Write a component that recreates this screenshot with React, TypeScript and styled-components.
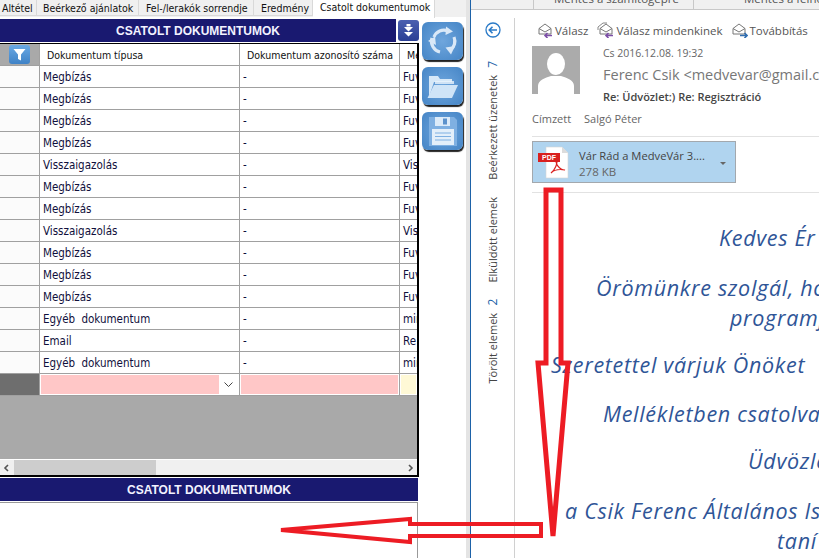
import React from 'react';
import styled, { createGlobalStyle } from 'styled-components';

const GlobalStyle = createGlobalStyle`
  html, body {
    margin: 0;
    padding: 0;
    background: #fff;
    overflow: hidden;
  }
  * {
    box-sizing: border-box;
  }
`;

const Page = styled.div`
  position: relative;
  display: flex;
  width: 819px;
  height: 558px;
  overflow: hidden;
  font-family: 'Liberation Sans', Arial, sans-serif;
  color: #111;
`;

/* left window */

const LeftPane = styled.div`
  display: flex;
  flex-direction: column;
  width: 470px;
  flex: none;
  border-right: 4px solid #e4e4e4;
`;

const TabBar = styled.div`
  display: flex;
  height: 17px;
  flex: none;
  background: #f0f0f0;
`;

const Tab = styled.div<{ $width: number; $pad: number; $active?: boolean }>`
  width: ${p => p.$width}px;
  height: ${p => (p.$active ? 18 : 16)}px;
  padding-left: ${p => p.$pad}px;
  background: ${p => (p.$active ? '#fff' : '#f0f0f0')};
  border-right: 1px solid #d9d9d9;
  border-bottom: ${p => (p.$active ? 'none' : '1px solid #d9d9d9')};
  font-family: 'DejaVu Sans', sans-serif;
  font-stretch: condensed;
  font-size: 10.5px;
  line-height: ${p => (p.$active ? 14 : 16)}px;
  white-space: nowrap;
  overflow: hidden;
  flex: none;
`;

const WindowBody = styled.div`
  display: flex;
  flex: 1;
  min-height: 0;
`;

const MainColumn = styled.div`
  display: flex;
  flex-direction: column;
  width: 419px;
  flex: none;
  padding-top: 2px;
`;

const TitleRow = styled.div`
  display: flex;
  gap: 2px;
  height: 23px;
  flex: none;
`;

const TitleBar = styled.div<{ $footer?: boolean }>`
  flex: 1;
  height: 23px;
  flex-shrink: 0;
  margin-top: ${p => (p.$footer ? 1 : 0)}px;
  margin-right: ${p => (p.$footer ? 1 : 0)}px;
  background: #191970;
  color: #f2f2ff;
  font-size: 12px;
  font-weight: bold;
  line-height: 24px;
  text-align: center;
  ${p => (p.$footer ? 'flex: none;' : '')}
`;

const CollapseButton = styled.div`
  display: flex;
  align-items: center;
  justify-content: center;
  width: 21px;
  height: 21px;
  margin-top: 1px;
  border-radius: 3px;
  background: linear-gradient(#4a5fb0, #2b3f94);
`;

const GridFrame = styled.div`
  display: flex;
  flex-direction: column;
  height: 434px;
  flex: none;
  margin-top: 1px;
  border-top: 1px solid #000;
  border-right: 2px solid #000;
  border-bottom: 2px solid #000;
  background: #a9a9a9;
  overflow: hidden;
`;

const GridRow = styled.div`
  display: grid;
  grid-template-columns: 39px 1px 199px 1px 159px 1px 17px;
  height: 22px;
  flex: none;
  background: #a0a0a0;
  border-bottom: 1px solid #a0a0a0;
`;

const Cell = styled.div<{ $pad?: number }>`
  background: #fff;
  padding-left: ${p => p.$pad ?? 2}px;
  font-family: 'DejaVu Sans', sans-serif;
  font-stretch: condensed;
  font-size: 11.5px;
  word-spacing: 3px;
  line-height: 23px;
  color: #10103c;
  white-space: nowrap;
  overflow: hidden;
`;

const Divider = styled.div`
  background: #a0a0a0;
`;

const HeaderStub = styled.div`
  display: flex;
  justify-content: center;
  padding-top: 1px;
  background: #a9a9a9;
`;

const HeaderCell = styled(Cell)`
  font-size: 10.5px;
  word-spacing: 0;
  line-height: 22px;
  color: #111;
`;

const FilterButton = styled.div`
  display: flex;
  align-items: center;
  justify-content: center;
  width: 21px;
  height: 19px;
  border-radius: 3px;
  background: linear-gradient(#6aa9e4, #3f82c6);
`;

const RowStub = styled.div`
  background: #fbfbfb;
`;

const NewRowStub = styled.div`
  background: #6e6e6e;
`;

const NewRowCell = styled.div<{ $tint: string }>`
  display: flex;
  align-items: stretch;
  padding: 1px 1px;
  background: #fff;
  & > span:first-child {
    flex: 1;
    background: ${p => p.$tint};
  }
`;

const ComboArrow = styled.span`
  display: flex;
  align-items: center;
  justify-content: center;
  width: 19px;
  flex: none;
`;

const GridFill = styled.div`
  flex: 1;
  background: #a9a9a9;
`;

const ScrollBar = styled.div`
  display: flex;
  align-items: center;
  height: 16px;
  flex: none;
  padding: 0 3px;
  background: #f0f0f0;
  border-top: 1px solid #fff;
`;

const ScrollThumb = styled.div`
  width: 142px;
  height: 15px;
  margin-left: 5px;
  background: #cdcdcd;
`;

const ScrollSpacer = styled.div`
  flex: 1;
`;

const WhitePanel = styled.div`
  flex: 1;
  margin-top: 1px;
  margin-right: 1px;
  border-top: 1px solid #999;
  border-right: 1px solid #999;
  background: #fff;
`;

const SideButtons = styled.div`
  display: flex;
  flex-direction: column;
  gap: 7px;
  padding: 5px 0 0 3px;
`;

const SideButton = styled.div`
  display: flex;
  align-items: center;
  justify-content: center;
  width: 41px;
  height: 38px;
  border-radius: 6px;
  background: radial-gradient(circle, #6fa6dd, #4585c6);
  box-shadow: 1px 2px 1px #222;
`;

/* right window */

const RightPane = styled.div`
  display: flex;
  flex-direction: column;
  flex: 1;
  min-width: 0;
  border-left: 1px solid #1d62a8;
`;

const SaveBar = styled.div`
  display: flex;
  align-items: flex-end;
  height: 10px;
  flex: none;
  padding-left: 62px;
  background: #f0f0f0;
  border-bottom: 1px solid #c8c8c8;
  overflow: hidden;
`;

const SaveItem = styled.div<{ $width: number; $pad: number }>`
  width: ${p => p.$width}px;
  height: 9px;
  flex: none;
  border-left: 1px solid #c8c8c8;
  padding-left: ${p => p.$pad}px;
  font-family: 'Open Sans', sans-serif;
  font-size: 11.5px;
  line-height: 9px;
  color: #555;
  white-space: nowrap;
  & > span {
    position: relative;
    top: -6px;
  }
`;

const RightBody = styled.div`
  display: flex;
  flex: 1;
  min-height: 0;
  padding-top: 8px;
`;

const NavRail = styled.div`
  display: flex;
  flex-direction: column;
  align-items: center;
  width: 44px;
  flex: none;
  padding-top: 4px;
  padding-left: 1px;
  border-right: 1px solid #d0d0d0;
`;

const NavList = styled.div`
  display: flex;
  flex-direction: column;
  gap: 17px;
  margin-top: 23px;
`;

const NavItem = styled.div`
  display: flex;
  gap: 7px;
  writing-mode: vertical-rl;
  transform: rotate(180deg);
  font-family: 'Open Sans', sans-serif;
  font-size: 11px;
  line-height: 14px;
  color: #444;
  white-space: nowrap;
  & b {
    font-weight: 400;
    color: #1d62a8;
    font-size: 12px;
  }
`;

const Message = styled.div`
  flex: 1;
  min-width: 0;
  padding: 2px 0 0 17px;
`;

const ReplyBar = styled.div`
  display: flex;
  gap: 9px;
  height: 20px;
  padding-left: 5px;
`;

const ReplyAction = styled.div`
  display: flex;
  align-items: center;
  gap: 1px;
  font-family: 'Open Sans', sans-serif;
  font-size: 11.5px;
  color: #555;
  white-space: nowrap;
`;

const Sender = styled.div`
  display: flex;
  gap: 23px;
  height: 48px;
  margin-top: 6px;
`;

const Avatar = styled.div`
  width: 48px;
  height: 48px;
  flex: none;
  background: #ababab;
  overflow: hidden;
`;

const SenderText = styled.div`
  display: flex;
  flex-direction: column;
  white-space: nowrap;
`;

const DateLine = styled.div`
  font-family: 'Open Sans', sans-serif;
  font-size: 10.5px;
  line-height: 14px;
  color: #666;
`;

const NameLine = styled.div`
  margin-top: 5px;
  font-family: 'Open Sans', sans-serif;
  font-size: 14.5px;
  line-height: 20px;
  color: #777;
`;

const SubjectLine = styled.div`
  margin-top: 4px;
  font-family: 'Open Sans', sans-serif;
  font-size: 11px;
  font-weight: 600;
  line-height: 16px;
  color: #444;
`;

const Recipient = styled.div`
  display: flex;
  gap: 13px;
  height: 25px;
  margin-top: 17px;
  font-family: 'Open Sans', sans-serif;
  font-size: 11px;
  line-height: 16px;
  color: #666;
`;

const Rule = styled.div`
  height: 1px;
  background: #e2e2e2;
`;

const Attachment = styled.div`
  display: flex;
  align-items: center;
  width: 204px;
  height: 42px;
  margin-top: 4px;
  padding: 2px 0 0 5px;
  background: #b0d4ef;
  border: 1px solid #a3a8ad;
  font-family: 'Open Sans', sans-serif;
`;

const PdfIcon = styled.div`
  position: relative;
  width: 32px;
  height: 34px;
  flex: none;
`;

const PdfBadge = styled.span`
  position: absolute;
  left: 0;
  top: 7px;
  width: 22px;
  height: 9px;
  background: #d9201f;
  color: #fff;
  font-family: 'Liberation Sans', sans-serif;
  font-size: 7px;
  font-weight: bold;
  line-height: 9px;
  text-align: center;
`;

const AttachmentText = styled.div`
  flex: 1;
  margin-left: 9px;
  white-space: nowrap;
`;

const AttachmentName = styled.div`
  font-size: 11.2px;
  line-height: 17px;
  color: #444;
`;

const AttachmentSize = styled.div`
  font-size: 11.5px;
  line-height: 16px;
  color: #666;
`;

const AttachmentCaret = styled.span`
  width: 0;
  height: 0;
  margin-right: 9px;
  border-left: 3px solid transparent;
  border-right: 3px solid transparent;
  border-top: 3px solid #666;
`;

const MailBody = styled.div`
  margin-top: 9px;
  border-top: 1px solid #e2e2e2;
  padding-top: 30px;
`;

const MailLine = styled.div<{ $indent: number; $gap: number }>`
  margin-top: ${p => p.$gap}px;
  padding-left: ${p => p.$indent}px;
  font-family: 'Open Sans', sans-serif;
  font-style: italic;
  font-size: 21.5px;
  letter-spacing: 0.7px;
  line-height: 30px;
  color: #2f5597;
  white-space: nowrap;
`;

const ArrowLayer = styled.svg`
  position: absolute;
  left: 0;
  top: 0;
  pointer-events: none;
`;

const rows = [
  ['Megbízás', 'Fuv'],
  ['Megbízás', 'Fuv'],
  ['Megbízás', 'Fuv'],
  ['Megbízás', 'Fuv'],
  ['Visszaigazolás', 'Vis'],
  ['Megbízás', 'Fuv'],
  ['Megbízás', 'Fuv'],
  ['Visszaigazolás', 'Vis'],
  ['Megbízás', 'Fuv'],
  ['Megbízás', 'Fuv'],
  ['Megbízás', 'Fuv'],
  ['Egyéb dokumentum', 'mir'],
  ['Email', 'Re'],
  ['Egyéb dokumentum', 'mir'],
];

const mailLines = [
  { text: 'Kedves Ér', indent: 187, gap: 0 },
  { text: 'Örömünkre szolgál, hog', indent: 64, gap: 20 },
  { text: 'programj', indent: 198, gap: 0 },
  { text: 'Szeretettel várjuk Önöket', indent: 19, gap: 17 },
  { text: 'Mellékletben csatolva', indent: 71, gap: 19 },
  { text: 'Üdvözle', indent: 216, gap: 17 },
  { text: 'a Csik Ferenc Általános Is', indent: 33, gap: 20 },
  { text: 'taní', indent: 245, gap: 0 },
];

function EnvelopeIcon({ arrow, double, flip }: { arrow: string; double?: boolean; flip?: boolean }) {
  return (
    <svg width={double ? 18 : 17} height="16" viewBox={double ? '0 0 18 16' : '1 0 17 16'} fill="none">
      {double && <path d="M1 8 V5 L6 1 H10" stroke="#888" strokeWidth="1" />}
      <path d="M3 6.5 L9 2 L15 6.5 V12 H3 Z M3 6.5 L9 10 L15 6.5" stroke="#777" strokeWidth="1" />
      {flip ? (
        <path d="M10 13.5 H17 M14.5 11 L17 13.5 L14.5 16" stroke={arrow} strokeWidth="1.6" />
      ) : (
        <path d="M16 13.5 H9 M11.5 11 L9 13.5 L11.5 16" stroke={arrow} strokeWidth="1.6" />
      )}
    </svg>
  );
}

export default function App() {
  return (
    <Page>
      <GlobalStyle />
      <LeftPane>
        <TabBar>
          <Tab $width={37} $pad={2}>Altétel</Tab>
          <Tab $width={102} $pad={6}>Beérkező ajánlatok</Tab>
          <Tab $width={115} $pad={7}>Fel-/lerakók sorrendje</Tab>
          <Tab $width={59} $pad={7}>Eredmény</Tab>
          <Tab $width={122} $pad={7} $active>Csatolt dokumentumok</Tab>
        </TabBar>
        <WindowBody>
          <MainColumn>
            <TitleRow>
              <TitleBar>CSATOLT DOKUMENTUMOK</TitleBar>
              <CollapseButton>
                <svg width="11" height="13" viewBox="0 0 11 13">
                  <path d="M3.5 0 H7.5 V2.5 H3.5 Z M1 3 H10 L5.5 7.5 Z M1 8 H10 L5.5 12.5 Z" fill="#fff" />
                </svg>
              </CollapseButton>
            </TitleRow>
            <GridFrame>
              <GridRow>
                <HeaderStub>
                  <FilterButton>
                    <svg width="13" height="13" viewBox="0 0 13 13">
                      <path d="M0.5 1 H12.5 L8 6.5 V12.5 L5 11 V6.5 Z" fill="#fff" />
                    </svg>
                  </FilterButton>
                </HeaderStub>
                <Divider />
                <HeaderCell $pad={7}>Dokumentum típusa</HeaderCell>
                <Divider />
                <HeaderCell $pad={7}>Dokumentum azonosító száma</HeaderCell>
                <Divider />
                <HeaderCell $pad={7}>Me</HeaderCell>
              </GridRow>
              {rows.map((row, i) => (
                <GridRow key={i}>
                  <RowStub />
                  <Divider />
                  <Cell $pad={3}>{row[0]}</Cell>
                  <Divider />
                  <Cell $pad={3}>-</Cell>
                  <Divider />
                  <Cell $pad={3}>{row[1]}</Cell>
                </GridRow>
              ))}
              <GridRow>
                <NewRowStub />
                <Divider />
                <NewRowCell $tint="#ffc7c7">
                  <span />
                  <ComboArrow>
                    <svg width="9" height="6" viewBox="0 0 9 6" fill="none">
                      <path d="M0.5 0.5 L4.5 4.5 L8.5 0.5" stroke="#444" strokeWidth="1" />
                    </svg>
                  </ComboArrow>
                </NewRowCell>
                <Divider />
                <NewRowCell $tint="#ffc7c7">
                  <span />
                </NewRowCell>
                <Divider />
                <NewRowCell $tint="#fff9d6">
                  <span />
                </NewRowCell>
              </GridRow>
              <GridFill />
              <ScrollBar>
                <svg width="6" height="8" viewBox="0 0 6 8" fill="none">
                  <path d="M5 1 L2 4 L5 7" stroke="#555" strokeWidth="1.6" />
                </svg>
                <ScrollThumb />
                <ScrollSpacer />
                <svg width="6" height="8" viewBox="0 0 6 8" fill="none">
                  <path d="M1 1 L4 4 L1 7" stroke="#555" strokeWidth="1.6" />
                </svg>
              </ScrollBar>
            </GridFrame>
            <TitleBar $footer>CSATOLT DOKUMENTUMOK</TitleBar>
            <WhitePanel />
          </MainColumn>
          <SideButtons>
            <SideButton>
              <svg width="32" height="32" viewBox="0 0 32 32" fill="none">
                <path d="M7 12 A10.5 10.5 0 0 1 21 6" stroke="#d9e8f7" strokeWidth="3.2" />
                <path d="M19 1.5 L26 6.5 L18.5 10 Z" fill="#d9e8f7" />
                <path d="M27 12 A11 11 0 0 1 23.5 25" stroke="#d9e8f7" strokeWidth="3.2" />
                <path d="M28 21 L24 29.5 L18.5 22.5 Z" fill="#d9e8f7" />
                <path d="M5 13 A11 11 0 0 0 13 27" stroke="#d9e8f7" strokeWidth="3.2" />
                <path d="M1 16 L8 11.5 L9 20 Z" fill="#d9e8f7" />
              </svg>
            </SideButton>
            <SideButton>
              <svg width="33" height="28" viewBox="0 0 33 28" fill="none">
                <path d="M3 25 V4 H12 L14 7 H26 V10 H8 Z" fill="#d6e8f8" />
                <path d="M9 9 H28 V12 H9 Z" fill="#e9f2fb" opacity="0.8" />
                <path d="M8 13 H32 L26 26 H1.5 Z" fill="#cfe4f7" />
              </svg>
            </SideButton>
            <SideButton>
              <svg width="30" height="31" viewBox="0 0 30 31">
                <path d="M1 1 H26 L29 4 V30 H1 Z" fill="#7fb0e2" />
                <rect x="7" y="1" width="15" height="9" fill="#dcebf9" />
                <rect x="15" y="2.5" width="4" height="6" fill="#5c92cc" />
                <rect x="4" y="13" width="22" height="16" fill="#e3effa" />
                <path d="M7 17 H23 M7 20.5 H23 M7 24 H23" stroke="#7fb0e2" strokeWidth="1" />
              </svg>
            </SideButton>
          </SideButtons>
        </WindowBody>
      </LeftPane>
      <RightPane>
        <SaveBar>
          <SaveItem $width={160} $pad={20}><span>Mentés a számítógépre</span></SaveItem>
          <SaveItem $width={126} $pad={50}><span>Mentés a felhőbe</span></SaveItem>
        </SaveBar>
        <RightBody>
          <NavRail>
            <svg width="16" height="16" viewBox="0 0 16 16" fill="none">
              <circle cx="8" cy="8" r="7" stroke="#2a7ac7" strokeWidth="1.3" />
              <path d="M12 8 H4.5 M7.5 4.8 L4.3 8 L7.5 11.2" stroke="#2a7ac7" strokeWidth="1.6" />
            </svg>
            <NavList>
              <NavItem>Beérkezett üzenetek <b>7</b></NavItem>
              <NavItem>Elküldött elemek</NavItem>
              <NavItem>Törölt elemek <b>2</b></NavItem>
            </NavList>
          </NavRail>
          <Message>
            <ReplyBar>
              <ReplyAction><EnvelopeIcon arrow="#7d4fa8" />Válasz</ReplyAction>
              <ReplyAction><EnvelopeIcon arrow="#7d4fa8" double />Válasz mindenkinek</ReplyAction>
              <ReplyAction><EnvelopeIcon arrow="#2f6db0" flip />Továbbítás</ReplyAction>
            </ReplyBar>
            <Sender>
              <Avatar>
                <svg width="48" height="48" viewBox="0 0 48 48">
                  <ellipse cx="24" cy="18" rx="9" ry="11" fill="#fff" />
                  <path d="M6 48 V40 C6 34 13 32 19 30 H29 C35 32 42 34 42 40 V48 Z" fill="#fff" />
                </svg>
              </Avatar>
              <SenderText>
                <DateLine>Cs 2016.12.08. 19:32</DateLine>
                <NameLine>Ferenc Csik &lt;medvevar@gmail.com&gt;</NameLine>
                <SubjectLine>Re: Üdvözlet:) Re: Regisztráció</SubjectLine>
              </SenderText>
            </Sender>
            <Recipient>
              <span>Címzett</span>
              <span>Salgó Péter</span>
            </Recipient>
            <Rule />
            <Attachment>
              <PdfIcon>
                <svg width="32" height="34" viewBox="0 0 32 34">
                  <path d="M8 1 H24 L30 7 V32 H8 Z" fill="#fff" stroke="#d5d5d5" strokeWidth="0.6" />
                  <path d="M24 1 V7 H30 Z" fill="#dcdcdc" />
                  <path d="M13 27 C17 24 20 17 18.5 14 C17 17 21 24 27 24 C22 23 16 24 13 27 Z" fill="none" stroke="#d9201f" strokeWidth="1.2" />
                </svg>
                <PdfBadge>PDF</PdfBadge>
              </PdfIcon>
              <AttachmentText>
                <AttachmentName>Vár Rád a MedveVár 3....</AttachmentName>
                <AttachmentSize>278 KB</AttachmentSize>
              </AttachmentText>
              <AttachmentCaret />
            </Attachment>
            <MailBody>
              {mailLines.map(line => (
                <MailLine key={line.text} $indent={line.indent} $gap={line.gap}>{line.text}</MailLine>
              ))}
            </MailBody>
          </Message>
        </RightBody>
      </RightPane>
      <ArrowLayer width="819" height="558" viewBox="0 0 819 558" fill="none">
        <path d="M546 190 H561 V363 H568 L553 536 L538 363 H546 Z" stroke="#ed1c24" strokeWidth="5" />
        <path d="M541 524 V536 H410 V542 L281 530 L410 519 V524 Z" stroke="#ed1c24" strokeWidth="4" />
      </ArrowLayer>
    </Page>
  );
}
